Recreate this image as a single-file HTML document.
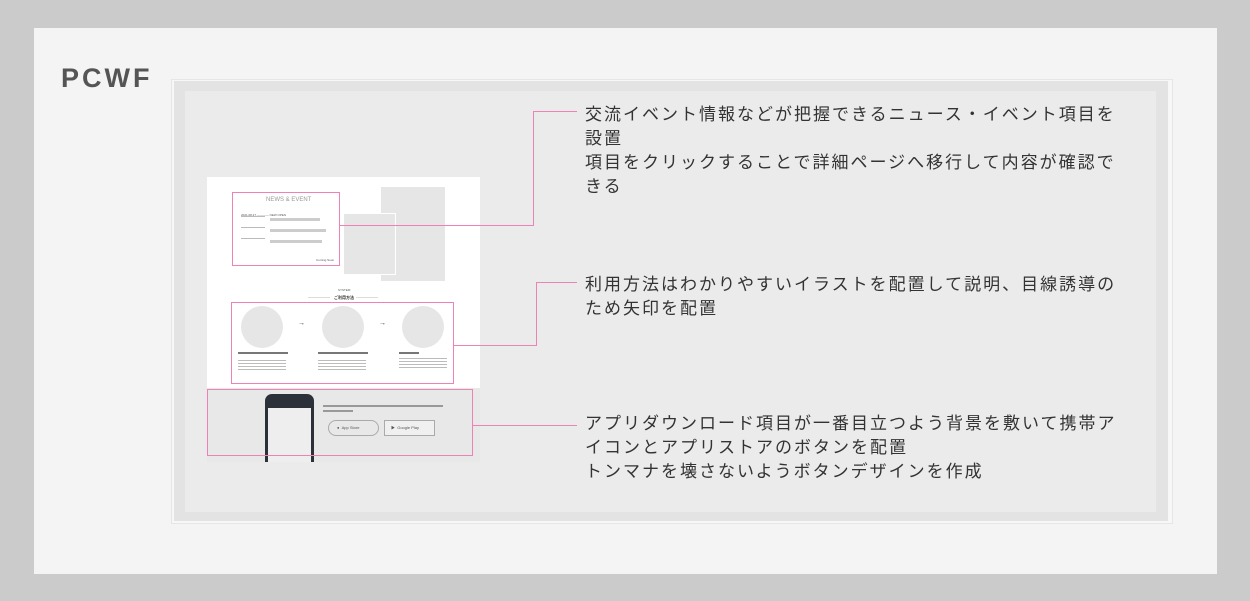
<!DOCTYPE html>
<html><head><meta charset="utf-8"><style>
*{margin:0;padding:0;box-sizing:border-box}
body{width:1250px;height:601px;background:#cbcbcb;position:relative;overflow:hidden;font-family:"Liberation Sans","Noto Sans CJK JP",sans-serif}
.a{position:absolute}
.card{left:34px;top:28px;width:1183px;height:546px;background:#f4f4f4}
.title{left:61px;top:63px;font-size:27px;font-weight:bold;color:#555;letter-spacing:3px}
.f1{left:171px;top:79px;width:1002px;height:445px;border:1px solid #e6e6e6;background:#f7f7f7}
.f2{left:174px;top:81px;width:994px;height:440px;background:#e3e3e3}
.f3{left:185px;top:91px;width:971px;height:421px;background:#ebebeb}
.pk{border:1.5px solid #ee82b4}
.ln{background:#ee82b4}
.txt{left:585px;font-size:17px;line-height:24px;color:#333;letter-spacing:2px;width:545px}
.g{background:#e6e6e6}
.c{border-radius:50%;width:42px;height:42px;background:#e6e6e6}
.s{font-size:3px;color:#555;line-height:4px}
</style></head><body>
<div class="a card"></div>
<div class="a title">PCWF</div>
<div class="a f1"></div>
<div class="a f2"></div>
<div class="a f3"></div>

<div class="a" style="left:207px;top:177px;width:273px;height:285px;background:#fff"></div>
<div class="a g" style="left:381px;top:187px;width:64px;height:94px"></div>
<div class="a g" style="left:343px;top:213px;width:53px;height:62px;border:1.5px solid #fff"></div>
<div class="a pk" style="left:232px;top:192px;width:108px;height:74px;background:#fff"></div>
<div class="a" style="left:266px;top:197px;font-size:6px;color:#999">NEWS &amp; EVENT</div>
<div class="a s" style="left:241px;top:213px">2021.08.27 ———— NEW OPEN<br>&nbsp;</div>
<div class="a g" style="left:270px;top:218px;width:50px;height:3px;background:#ccc"></div>
<div class="a g" style="left:270px;top:229px;width:56px;height:3px;background:#ccc"></div>
<div class="a g" style="left:270px;top:240px;width:52px;height:3px;background:#ccc"></div>
<div class="a" style="left:241px;top:216px;width:24px;height:1px;background:#bbb"></div>
<div class="a" style="left:241px;top:227px;width:24px;height:1px;background:#bbb"></div>
<div class="a" style="left:241px;top:238px;width:24px;height:1px;background:#bbb"></div>
<div class="a s" style="left:316px;top:258px">Coming Soon</div>
<div class="a s" style="left:338px;top:288px">SYSTEM</div>
<div class="a" style="left:334px;top:295px;font-size:4px;color:#333;font-weight:bold">ご利用方法</div>
<div class="a" style="left:308px;top:297px;width:22px;height:1px;background:#ddd"></div>
<div class="a" style="left:356px;top:297px;width:22px;height:1px;background:#ddd"></div>
<div class="a pk" style="left:231px;top:302px;width:223px;height:82px"></div>
<div class="a c" style="left:241px;top:306px"></div>
<div class="a c" style="left:322px;top:306px"></div>
<div class="a c" style="left:402px;top:306px"></div>
<div class="a" style="left:298px;top:320px;font-size:7px;color:#333">→</div>
<div class="a" style="left:379px;top:320px;font-size:7px;color:#333">→</div>
<div class="a" style="left:238px;top:352px;width:50px;height:2px;background:#777"></div>
<div class="a" style="left:318px;top:352px;width:50px;height:2px;background:#777"></div>
<div class="a" style="left:399px;top:352px;width:20px;height:2px;background:#777"></div>
<div class="a" style="left:238px;top:360px;width:48px;height:12px;background:repeating-linear-gradient(#bbb 0 1px,transparent 1px 3px)"></div>
<div class="a" style="left:318px;top:360px;width:48px;height:10px;background:repeating-linear-gradient(#bbb 0 1px,transparent 1px 3px)"></div>
<div class="a" style="left:399px;top:358px;width:48px;height:12px;background:repeating-linear-gradient(#bbb 0 1px,transparent 1px 3px)"></div>

<div class="a" style="left:207px;top:388px;width:273px;height:74px;background:#e8e8e8"></div>
<div class="a" style="left:265px;top:394px;width:49px;height:68px;background:#2c3038;border-radius:7px 7px 0 0"></div>
<div class="a" style="left:268px;top:408px;width:43px;height:54px;background:#eee"></div>
<div class="a pk" style="left:207px;top:389px;width:266px;height:67px"></div>
<div class="a" style="left:323px;top:405px;width:120px;height:2px;background:#999"></div>
<div class="a" style="left:323px;top:410px;width:30px;height:2px;background:#999"></div>
<div class="a" style="left:328px;top:420px;width:51px;height:16px;border:1px solid #aaa;border-radius:8px;font-size:4px;color:#555;line-height:14px;padding-left:8px">● &nbsp;App Store</div>
<div class="a" style="left:384px;top:420px;width:51px;height:16px;border:1px solid #aaa;font-size:4px;color:#555;line-height:14px;padding-left:6px;background:#f0f0f0">▶ &nbsp;Google Play</div>

<div class="a ln" style="left:340px;top:225px;width:194px;height:1px"></div>
<div class="a ln" style="left:533px;top:111px;width:1px;height:115px"></div>
<div class="a ln" style="left:533px;top:111px;width:44px;height:1px"></div>
<div class="a ln" style="left:453px;top:345px;width:84px;height:1px"></div>
<div class="a ln" style="left:536px;top:282px;width:1px;height:64px"></div>
<div class="a ln" style="left:536px;top:282px;width:41px;height:1px"></div>
<div class="a ln" style="left:472px;top:425px;width:105px;height:1px"></div>

<div class="a txt" style="top:103px">交流イベント情報などが把握できるニュース・イベント項目を設置<br>項目をクリックすることで詳細ページへ移行して内容が確認できる</div>
<div class="a txt" style="top:273px">利用方法はわかりやすいイラストを配置して説明、目線誘導のため矢印を配置</div>
<div class="a txt" style="top:412px">アプリダウンロード項目が一番目立つよう背景を敷いて携帯アイコンとアプリストアのボタンを配置<br>トンマナを壊さないようボタンデザインを作成</div>
</body></html>
